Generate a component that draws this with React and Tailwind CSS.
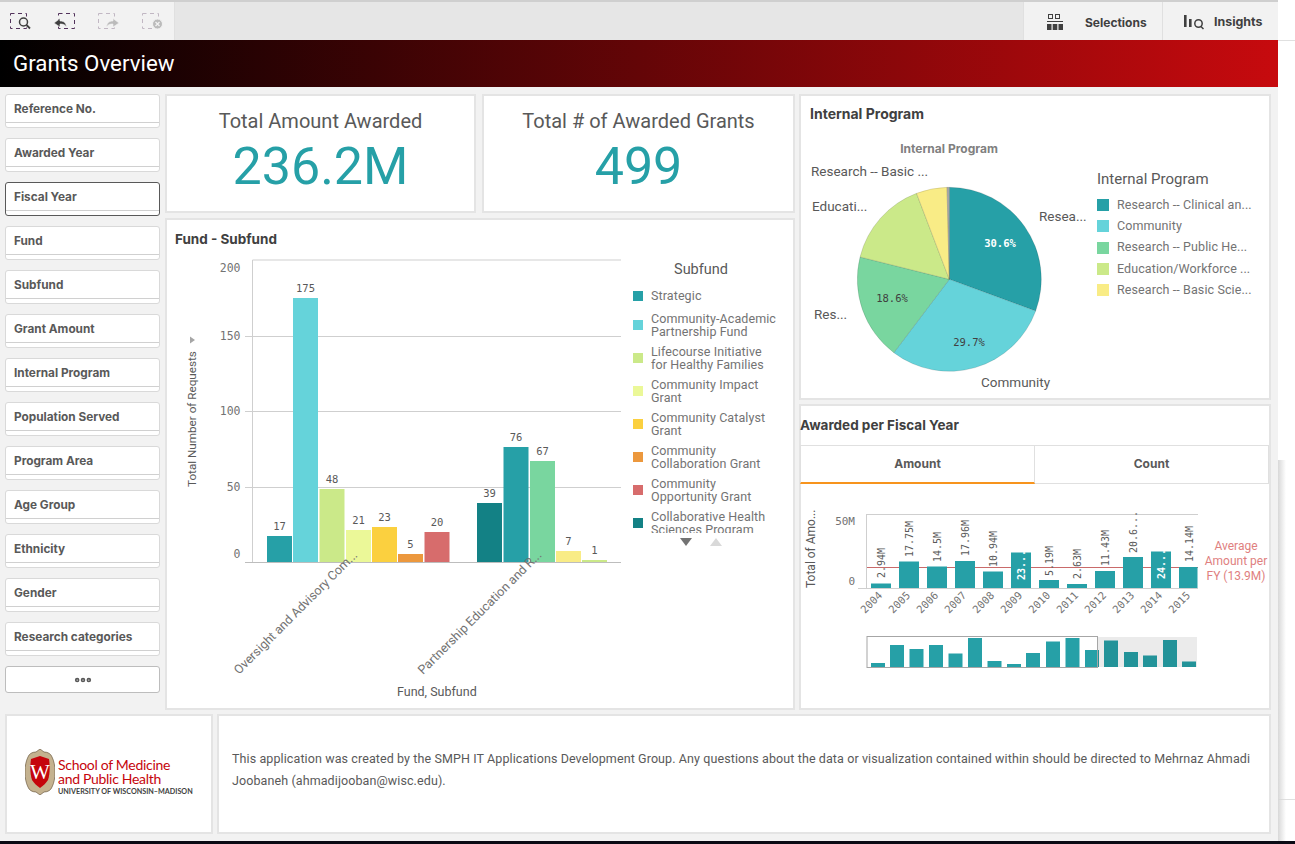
import { MoreHorizontal } from 'lucide-react';

const TEAL = '#26a0a7';

const filters = [
    'Reference No.', 'Awarded Year', 'Fiscal Year', 'Fund', 'Subfund', 'Grant Amount', 'Internal Program',
    'Population Served', 'Program Area', 'Age Group', 'Ethnicity', 'Gender', 'Research categories',
];

const subfundLegend = [
    { color: '#26a0a7', lines: ['Strategic'] },
    { color: '#65d3da', lines: ['Community-Academic', 'Partnership Fund'] },
    { color: '#cbe989', lines: ['Lifecourse Initiative', 'for Healthy Families'] },
    { color: '#ebf898', lines: ['Community Impact', 'Grant'] },
    { color: '#fbd03f', lines: ['Community Catalyst', 'Grant'] },
    { color: '#ec983d', lines: ['Community', 'Collaboration Grant'] },
    { color: '#d76c6c', lines: ['Community', 'Opportunity Grant'] },
    { color: '#138185', lines: ['Collaborative Health', 'Sciences Program'] },
];

const programLegend = [
    { color: '#26a0a7', label: 'Research -- Clinical an...' },
    { color: '#65d3da', label: 'Community' },
    { color: '#79d69f', label: 'Research -- Public He...' },
    { color: '#cbe989', label: 'Education/Workforce ...' },
    { color: '#f9ec86', label: 'Research -- Basic Scie...' },
];

// x, top, fill, value
const fundBars = [
    [267, 536, '#26a0a7', '17'],
    [293, 298, '#65d3da', '175'],
    [319.5, 489, '#cbe989', '48'],
    [346, 530, '#ebf898', '21'],
    [372, 527, '#fbd03f', '23'],
    [398, 554, '#ec983d', '5'],
    [424.5, 532, '#d76c6c', '20'],
    [477, 503, '#138185', '39'],
    [503.5, 447, '#26a0a7', '76'],
    [530, 461, '#79d69f', '67'],
    [556, 551, '#f9ec86', '7'],
    [582, 560, '#cbe989', '1'],
];

// year, top of bar, label, bottom of label, label sits inside the bar
const yearBars = [
    ['2004', 583.5, '2.94M', 578],
    ['2005', 561.5, '17.75M', 557],
    ['2006', 566.5, '14.5M', 562],
    ['2007', 561, '17.96M', 556],
    ['2008', 571.5, '10.94M', 567],
    ['2009', 552.5, '23...', 580, true],
    ['2010', 580, '5.19M', 576],
    ['2011', 584, '2.63M', 579],
    ['2012', 571, '11.43M', 566],
    ['2013', 557, '20.6...', 553],
    ['2014', 551.5, '24...', 579, true],
    ['2015', 567, '14.14M', 562],
];

const miniBars = [
    [871, 663], [890, 645], [909.5, 649], [929, 645], [948.5, 653.5], [968, 638], [987.5, 661], [1007, 664], [1026, 653],
    [1046, 641.5], [1065.5, 638], [1085, 650], [1104, 640.5], [1124, 652], [1143, 655.5], [1163, 640], [1182, 661.5],
];

const pieSlices = [
    { from: 0, to: 30.6, color: '#26a0a7' },
    { from: 30.6, to: 60.3, color: '#65d3da' },
    { from: 60.3, to: 78.9, color: '#79d69f' },
    { from: 78.9, to: 94.2, color: '#cbe989' },
    { from: 94.2, to: 99.6, color: '#f9ec86' },
    { from: 99.6, to: 100, color: '#a9a9a9' },
];

function slicePath(from, to) {
    const cx = 949.3, cy = 279.3, r = 92;
    const point = (pct) => {
        const a = (pct / 100) * 2 * Math.PI;
        return `${(cx + r * Math.sin(a)).toFixed(2)} ${(cy - r * Math.cos(a)).toFixed(2)}`;
    };
    return `M${cx} ${cy}L${point(from)}A${r} ${r} 0 ${to - from > 50 ? 1 : 0} 1 ${point(to)}Z`;
}

function Card({ className, children }) {
    return <div className={`bg-white border-2 border-[#e4e4e4] ${className}`}>{children}</div>;
}

function SelectionIcon({ x, faded, children }) {
    return (
        <g opacity={faded ? 0.3 : 1} transform={`translate(${x} 0)`}>
            <rect x="0.5" y="13.5" width="16" height="15" fill="none" stroke="#52325b" strokeDasharray="4 3.5" />
            {children}
        </g>
    );
}

function Toolbar() {
    return (
        <div className="flex h-10 w-[1278px] border-t-2 border-[#cfcfcf] bg-[#e6e6e6]">
            <div className="w-[175px] bg-[#f2f2f2] border-r border-[#e0e0e0]">
                <svg width="175" height="38" viewBox="0 2 175 38">
                    <SelectionIcon x={10}>
                        <circle cx="13.5" cy="22" r="4" fill="#f2f2f2" stroke="#404040" strokeWidth="1.5" />
                        <path d="M16.5 25l3.5 3.5" stroke="#404040" strokeWidth="1.8" />
                    </SelectionIcon>
                    <SelectionIcon x={58}>
                        <path d="M-4 23l6-4.5v2.5c4 0 6 2 6.5 6-1.5-2.5-3.5-3-6.5-3v3z" fill="#404040" stroke="#f2f2f2" strokeWidth="0.6" />
                    </SelectionIcon>
                    <SelectionIcon x={98} faded>
                        <path d="M21 23l-6-4.5v2.5c-4 0-6 2-6.5 6 1.5-2.5 3.5-3 6.5-3v3z" fill="#404040" stroke="#f2f2f2" strokeWidth="0.6" />
                    </SelectionIcon>
                    <SelectionIcon x={142} faded>
                        <circle cx="15.5" cy="24" r="5" fill="#404040" stroke="#f2f2f2" />
                        <path d="M13.5 22l4 4m0-4l-4 4" stroke="#f2f2f2" strokeWidth="1.3" />
                    </SelectionIcon>
                </svg>
            </div>
            <div className="flex-1" />
            <div className="flex w-[139px] items-center bg-[#f2f2f2] border-l border-[#e0e0e0] pt-[3px]">
                <svg className="ml-[23px]" width="17" height="17" viewBox="0 0 17 17">
                    <rect x="1.5" y="0.5" width="4" height="4" fill="none" stroke="#404040" />
                    <rect x="8.5" y="0.5" width="4" height="4" fill="none" stroke="#404040" />
                    <path d="M0 7.5h16" stroke="#404040" />
                    <path d="M0 10h4.5v6H0zM5.7 10h4.6v6H5.7zM11.5 10H16v6h-4.5z" fill="#404040" />
                </svg>
                <span className="ml-[21px] text-[12px] font-bold text-[#404040] font-['Inter',sans-serif]">Selections</span>
            </div>
            <div className="flex w-[116px] items-center bg-[#f2f2f2] border-l border-[#e0e0e0] pt-[2px]">
                <svg className="ml-[21px]" width="21" height="16" viewBox="0 0 21 16">
                    <path d="M0 1h2.6v12H0zM5 5h2.6v8H5z" fill="#404040" />
                    <circle cx="14.5" cy="9.5" r="3.7" fill="none" stroke="#404040" strokeWidth="1.5" />
                    <path d="M17 12.5l2.5 2.5" stroke="#404040" strokeWidth="1.5" />
                </svg>
                <span className="ml-[9px] text-[12.4px] font-bold text-[#404040] font-['Inter',sans-serif]">Insights</span>
            </div>
        </div>
    );
}

function FilterPane({ label, active }) {
    return (
        <div className={`h-[34px] rounded-[3px] border bg-white ${active ? 'border-[#595959]' : 'border-[#d9d9d9]'}`}>
            <div className="h-[28px] border-b border-[#d0d0d0] pl-2 pt-[5px] text-[11.8px] leading-[18px] font-bold text-[#595959] font-['Inter',sans-serif]">
                {label}
            </div>
        </div>
    );
}

function Sidebar() {
    return (
        <div className="flex w-[155px] flex-col gap-[10px]">
            {filters.map((f) => <FilterPane key={f} label={f} active={f === 'Fiscal Year'} />)}
            <div className="flex h-[27px] items-center justify-center rounded-[3px] border border-[#bdbdbd] bg-white">
                <MoreHorizontal className="h-5 w-5 text-[#595959]" strokeWidth={3.5} />
            </div>
        </div>
    );
}

function Kpi({ title, value, className }) {
    return (
        <Card className={`flex h-[119px] flex-col items-center ${className}`}>
            <div className="mt-[13px] text-[20px] leading-[24px] text-[#595959]">{title}</div>
            <div className="mt-[4px] text-[52px] leading-[60px] text-[#26a0a7]">{value}</div>
        </Card>
    );
}

function FundChart() {
    return (
        <svg width="460" height="458" viewBox="165 250 460 458" className="-ml-[2px] shrink-0">
            <path d="M252.5 260H621" stroke="#cfcfcf" fill="none" />
            <path d="M252.5 260V562" stroke="#cfcfcf" fill="none" />
            {[336.5, 411.5, 487.5].map((y) => <path key={y} d={`M245 ${y}H621`} stroke="#cfcfcf" />)}
            <path d="M245 562.5H621" stroke="#bdbdbd" />
            {[['200', 272], ['150', 340], ['100', 415], ['50', 491], ['0', 558]].map(([t, y]) => (
                <text key={t} x="240.5" y={y} textAnchor="end" className="fill-[#737373] text-[11.5px] font-['DejaVu_Sans_Mono',monospace]">{t}</text>
            ))}
            {fundBars.map(([x, top, fill, value]) => (
                <g key={x}>
                    <rect x={x} y={top} width="25" height={562 - top} fill={fill} />
                    <text x={x + 12.5} y={top - 6} textAnchor="middle" className="fill-[#595959] text-[10.5px] font-['DejaVu_Sans_Mono',monospace]">{value}</text>
                </g>
            ))}
            <path d="M190 336.5l5 3.5-5 3.5z" fill="#a6a6a6" />
            <text transform="translate(196 487) rotate(-90)" className="fill-[#595959] text-[11.7px]">Total Number of Requests</text>
            <text transform="translate(239 675) rotate(-45)" className="fill-[#737373] text-[12.6px]">Oversight and Advisory Com...</text>
            <text transform="translate(423 675) rotate(-45)" className="fill-[#737373] text-[12.6px]">Partnership Education and R...</text>
            <text x="397" y="696" className="fill-[#595959] text-[12.5px]">Fund, Subfund</text>
        </svg>
    );
}

function SubfundLegend() {
    return (
        <div className="w-[164px] pl-2 pt-[12px]">
            <div className="pr-[20px] text-center text-[14.5px] leading-[16px] text-[#595959]">Subfund</div>
            <div className="mt-[11px] flex h-[244px] flex-col gap-[7px] overflow-hidden">
                {subfundLegend.map((item) => (
                    <div key={item.color} className={`flex items-center gap-2 ${item.lines.length === 1 ? 'mb-[3px]' : ''}`}>
                        <span className="h-[10px] w-[10px] shrink-0" style={{ backgroundColor: item.color }} />
                        <div className="text-[12.5px] leading-[13px] tracking-[0.1px] text-[#737373] whitespace-nowrap">
                            {item.lines.map((l) => <div key={l}>{l}</div>)}
                        </div>
                    </div>
                ))}
            </div>
            <div className="mt-[5px] flex gap-[18px] pl-[47px]">
                <svg width="12" height="8"><path d="M0 0h12L6 8z" fill="#737373" /></svg>
                <svg width="12" height="8"><path d="M0 8h12L6 0z" fill="#d9d9d9" /></svg>
            </div>
        </div>
    );
}

function PieChart() {
    return (
        <svg width="288" height="260" viewBox="800 135 288 260" className="-ml-[1px] shrink-0">
            <text x="949" y="153" textAnchor="middle" className="fill-[#808080] text-[12px] font-bold font-['Inter',sans-serif]">Internal Program</text>
            {pieSlices.map((s) => (
                <path key={s.from} d={slicePath(s.from, s.to)} fill={s.color} stroke="#000000" strokeOpacity="0.15" strokeWidth="0.8" />
            ))}
            <text x="811" y="176" className="fill-[#595959] text-[13.5px]">Research -- Basic ...</text>
            <text x="812" y="211" className="fill-[#595959] text-[13.5px]">Educati...</text>
            <text x="814" y="319" className="fill-[#595959] text-[13.5px]">Res...</text>
            <text x="981" y="387" className="fill-[#595959] text-[13.5px]">Community</text>
            <text x="1039" y="221" className="fill-[#595959] text-[13.5px]">Resea...</text>
            <text x="1000" y="247" textAnchor="middle" className="fill-white text-[10.5px] font-bold font-['DejaVu_Sans_Mono',monospace]">30.6%</text>
            <text x="892" y="302" textAnchor="middle" className="fill-[#404040] text-[10.5px] font-['DejaVu_Sans_Mono',monospace]">18.6%</text>
            <text x="969" y="346" textAnchor="middle" className="fill-[#404040] text-[10.5px] font-['DejaVu_Sans_Mono',monospace]">29.7%</text>
        </svg>
    );
}

function ProgramLegend() {
    return (
        <div className="flex-1 pl-[9px] pt-[35px]">
            <div className="text-[15px] leading-[18px] text-[#595959]">Internal Program</div>
            <div className="mt-[11px] flex flex-col gap-[9.3px]">
                {programLegend.map((item) => (
                    <div key={item.color} className="flex h-3 items-center gap-2 text-[12.5px] tracking-[0.1px] text-[#737373] whitespace-nowrap">
                        <span className="h-3 w-3 shrink-0" style={{ backgroundColor: item.color }} />
                        {item.label}
                    </div>
                ))}
            </div>
        </div>
    );
}

function YearChart() {
    return (
        <svg width="470" height="180" viewBox="800 500 470 180" className="-ml-[1px]">
            <path d="M867 514.5H1198" stroke="#cfcfcf" />
            <path d="M866.5 514V588" stroke="#cfcfcf" />
            <path d="M867 567.5H1198" stroke="#c96a6a" />
            <path d="M858 588.5H1198" stroke="#cfcfcf" />
            <text x="855" y="525" textAnchor="end" className="fill-[#737373] text-[11px] font-['DejaVu_Sans_Mono',monospace]">50M</text>
            <text x="855" y="585" textAnchor="end" className="fill-[#737373] text-[11px] font-['DejaVu_Sans_Mono',monospace]">0</text>
            <text transform="translate(815 588) rotate(-90)" className="fill-[#595959] text-[12px]">Total of Amo...</text>
            {yearBars.map(([year, top, label, labelBottom, inside], i) => {
                const x = 871 + i * 28;
                return (
                    <g key={year}>
                        <rect x={x} y={top} width={i === 11 ? 18.5 : 20} height={588 - top} fill={TEAL} />
                        <text transform={`translate(${x + 14} ${labelBottom}) rotate(-90)`} className={`text-[10px] font-['DejaVu_Sans_Mono',monospace] ${inside ? 'fill-white font-bold' : 'fill-[#595959]'}`}>{label}</text>
                        <text transform={`translate(${x + 12} 596) rotate(-45)`} textAnchor="end" className="fill-[#737373] text-[10.5px] font-['DejaVu_Sans_Mono',monospace]">{year}</text>
                    </g>
                );
            })}
            {['Average', 'Amount per', 'FY (13.9M)'].map((t, i) => (
                <text key={t} x="1236" y={550 + i * 15} textAnchor="middle" className="fill-[#e07f7f] text-[12px]">{t}</text>
            ))}
            {miniBars.map(([x, top]) => <rect key={x} x={x} y={top} width="14" height={667 - top} fill={TEAL} />)}
            <rect x="1097.5" y="637" width="99.5" height="30" fill="#000000" fillOpacity="0.08" />
            <rect x="867" y="636.5" width="230.5" height="31" fill="none" stroke="#a6a6a6" />
        </svg>
    );
}

function Crest() {
    return (
        <svg width="30" height="46" viewBox="0 0 30 46" className="mt-[33px] shrink-0">
            <path d="M15 0l4 3c4 0 7 2 8 5 2 4 3 9 3 15s-1 11-3 15c-1 3-4 5-8 5l-4 3-4-3c-4 0-7-2-8-5-2-4-3-9-3-15S1 12 3 8c1-3 4-5 8-5z" fill="#c4b28f" stroke="#7a6a50" strokeWidth="0.8" />
            <path d="M6 10c3-1 6-2 9-3 3 1 6 2 9 3 1 7 1 15-1 21-2 3-5 6-8 8-3-2-6-5-8-8-2-6-2-14-1-21z" fill="#c5050c" />
            <text x="15" y="30" textAnchor="middle" className="fill-white text-[21px] font-['Liberation_Serif',serif]">W</text>
        </svg>
    );
}

export default function App() {
    return (
        <div className="relative h-[844px] w-[1295px] overflow-hidden bg-white font-['Roboto',sans-serif]">
            <Toolbar />
            <div className="h-[47px] w-[1278px] bg-linear-to-r/srgb from-black to-[#c70a0e] pl-[13px] text-[22.3px] leading-[47px] text-white">
                Grants Overview
            </div>
            <div className="h-[754px] w-[1278px] bg-[#f2f2f2] pt-[7px] pl-[5px]">
                <div className="flex gap-[5px]">
                    <Sidebar />
                    <div className="flex w-[630px] flex-col gap-[5px]">
                        <div className="flex gap-[6px]">
                            <Kpi title="Total Amount Awarded" value="236.2M" className="w-[311px]" />
                            <Kpi title="Total # of Awarded Grants" value="499" className="w-[313px]" />
                        </div>
                        <Card className="h-[492px]">
                            <div className="pl-[8px] pt-[10px] pb-[2px] text-[13.5px] leading-[18px] font-bold text-[#404040] font-['Inter',sans-serif]">Fund - Subfund</div>
                            <div className="flex">
                                <FundChart />
                                <SubfundLegend />
                            </div>
                        </Card>
                    </div>
                    <div className="-ml-px flex w-[472px] flex-col gap-[4px]">
                        <Card className="h-[306px]">
                            <div className="pl-[9px] pt-[9px] pb-[12px] text-[14px] leading-[18px] font-bold text-[#404040] font-['Inter',sans-serif]">Internal Program</div>
                            <div className="flex">
                                <PieChart />
                                <ProgramLegend />
                            </div>
                        </Card>
                        <Card className="h-[306px]">
                            <div className="-ml-px pt-[10px] text-[13.5px] leading-[18px] font-bold text-[#404040] font-['Inter',sans-serif]">Awarded per Fiscal Year</div>
                            <div className="-ml-px mt-[11px] flex h-[39px] text-[12px] font-bold text-[#595959] font-['Inter',sans-serif]">
                                <div className="flex w-[235px] items-center justify-center border border-[#e0e0e0] border-b-2 border-b-[#f7941d]">Amount</div>
                                <div className="flex flex-1 items-center justify-center border-y border-r border-[#e0e0e0] pb-px">Count</div>
                            </div>
                            <div className="mt-[16px]">
                                <YearChart />
                            </div>
                        </Card>
                    </div>
                </div>
                <div className="mt-[4px] flex gap-[4px]">
                    <Card className="flex h-[120px] w-[208px] items-start pl-[18px]">
                        <Crest />
                        <div className="ml-[3px] mt-[42px] font-['Lato',sans-serif]">
                            <div className="text-[14px] leading-[14px] tracking-[-0.3px] text-[#c5050c]">
                                School of Medicine<br />and Public Health
                            </div>
                            <div className="mt-[1px] text-[7.2px] leading-[10px] font-bold whitespace-nowrap text-[#404040]">UNIVERSITY OF WISCONSIN–MADISON</div>
                        </div>
                    </Card>
                    <Card className="h-[120px] w-[1054px] pl-[13px] pr-[15px] pt-[32px] text-[12.5px] leading-[22px] tracking-[0.1px] text-[#595959]">
                        This application was created by the SMPH IT Applications Development Group. Any questions about the data or visualization contained within should be directed to Mehrnaz Ahmadi Joobaneh (ahmadijooban@wisc.edu).
                    </Card>
                </div>
            </div>
            <div className="h-[3px] w-full bg-[#0a0a14]" />
            {/* page behind the app peeks out on the right */}
            <div className="absolute top-[40px] left-[1278px] h-px w-[17px] bg-[#e0e0e0]" />
            <div className="absolute top-[799px] left-[1278px] h-px w-[17px] bg-[#e0e0e0]" />
            <div className="absolute top-[460px] left-[1278px] h-[381px] w-[8px] bg-gradient-to-r from-[#d8d8d8] to-transparent" />
        </div>
    );
}
